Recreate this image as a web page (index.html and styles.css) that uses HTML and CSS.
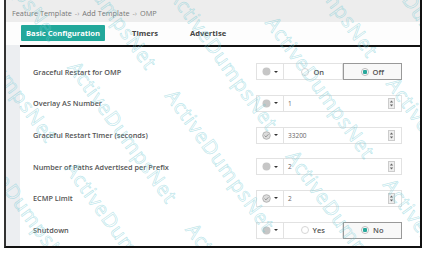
FILE: index.html
```html
<!DOCTYPE html>
<html lang="en">
<head>
    <meta charset="UTF-8">
    <title>Feature Template - OMP</title>
    <link rel="stylesheet" href="styles.css">
</head>
<body>
    <div class="frame">
        <div class="crumbs">Feature Template <span class="sep">-›</span> Add Template <span class="sep">-›</span> OMP</div>
        <div class="tabs">
            <span class="tab active">Basic Configuration</span>
            <span class="tab">Timers</span>
            <span class="tab">Advertise</span>
        </div>
        <div class="panel">
            <div class="strip"></div>
            <div class="form">
                <div class="row">
                    <span class="label">Graceful Restart for OMP</span>
                    <div class="control">
                        <span class="scope"><svg width="9" height="9" viewBox="0 0 9 9"><circle cx="4.5" cy="4.5" r="4" fill="#c6c6c6"/></svg><i class="caret"></i></span>
                        <div class="choice">
                            <span class="opt"><i class="radio"></i>On</span>
                            <span class="opt selected"><i class="radio"></i>Off</span>
                        </div>
                    </div>
                </div>
                <div class="row">
                    <span class="label">Overlay AS Number</span>
                    <div class="control">
                        <span class="scope"><svg width="9" height="9" viewBox="0 0 9 9"><circle cx="4.5" cy="4.5" r="4" fill="#c6c6c6"/></svg><i class="caret"></i></span>
                        <div class="field"><span class="value">1</span><span class="spin"><svg width="7" height="11" viewBox="0 0 7 11"><rect x="0.5" y="0.5" width="6" height="10" fill="#eee" stroke="#ccc"/><path d="M1.8 4.6 3.5 2.4 5.2 4.6z M1.8 6.4 3.5 8.6 5.2 6.4z" fill="#666"/></svg></span></div>
                    </div>
                </div>
                <div class="row">
                    <span class="label">Graceful Restart Timer (seconds)</span>
                    <div class="control">
                        <span class="scope"><svg width="9" height="9" viewBox="0 0 9 9"><circle cx="4.5" cy="4.5" r="3.8" fill="#dcdcdc" stroke="#a8a8a8" stroke-width="0.8"/><path d="M2.6 4.6l1.3 1.3 2.5-2.6" fill="none" stroke="#888" stroke-width="0.9"/></svg><i class="caret"></i></span>
                        <div class="field"><span class="value">33200</span><span class="spin"><svg width="7" height="11" viewBox="0 0 7 11"><rect x="0.5" y="0.5" width="6" height="10" fill="#eee" stroke="#ccc"/><path d="M1.8 4.6 3.5 2.4 5.2 4.6z M1.8 6.4 3.5 8.6 5.2 6.4z" fill="#666"/></svg></span></div>
                    </div>
                </div>
                <div class="row">
                    <span class="label">Number of Paths Advertised per Prefix</span>
                    <div class="control">
                        <span class="scope"><svg width="9" height="9" viewBox="0 0 9 9"><circle cx="4.5" cy="4.5" r="4" fill="#c6c6c6"/></svg><i class="caret"></i></span>
                        <div class="field"><span class="value">2</span><span class="spin"><svg width="7" height="11" viewBox="0 0 7 11"><rect x="0.5" y="0.5" width="6" height="10" fill="#eee" stroke="#ccc"/><path d="M1.8 4.6 3.5 2.4 5.2 4.6z M1.8 6.4 3.5 8.6 5.2 6.4z" fill="#666"/></svg></span></div>
                    </div>
                </div>
                <div class="row">
                    <span class="label">ECMP Limit</span>
                    <div class="control">
                        <span class="scope"><svg width="9" height="9" viewBox="0 0 9 9"><circle cx="4.5" cy="4.5" r="3.8" fill="#dcdcdc" stroke="#a8a8a8" stroke-width="0.8"/><path d="M2.6 4.6l1.3 1.3 2.5-2.6" fill="none" stroke="#888" stroke-width="0.9"/></svg><i class="caret"></i></span>
                        <div class="field"><span class="value">2</span><span class="spin"><svg width="7" height="11" viewBox="0 0 7 11"><rect x="0.5" y="0.5" width="6" height="10" fill="#eee" stroke="#ccc"/><path d="M1.8 4.6 3.5 2.4 5.2 4.6z M1.8 6.4 3.5 8.6 5.2 6.4z" fill="#666"/></svg></span></div>
                    </div>
                </div>
                <div class="row">
                    <span class="label">Shutdown</span>
                    <div class="control">
                        <span class="scope"><svg width="9" height="9" viewBox="0 0 9 9"><circle cx="4.5" cy="4.5" r="4" fill="#c6c6c6"/></svg><i class="caret"></i></span>
                        <div class="choice">
                            <span class="opt"><i class="radio"></i>Yes</span>
                            <span class="opt selected"><i class="radio"></i>No</span>
                        </div>
                    </div>
                </div>
            </div>
        </div>
        <div class="watermark">
            <div class="wm-line">ActiveDumpsNet ActiveDumpsNet ActiveDumpsNet ActiveDumpsNet</div>
            <div class="wm-line shift">ActiveDumpsNet ActiveDumpsNet ActiveDumpsNet ActiveDumpsNet</div>
            <div class="wm-line">ActiveDumpsNet ActiveDumpsNet ActiveDumpsNet ActiveDumpsNet</div>
            <div class="wm-line shift">ActiveDumpsNet ActiveDumpsNet ActiveDumpsNet ActiveDumpsNet</div>
            <div class="wm-line">ActiveDumpsNet ActiveDumpsNet ActiveDumpsNet ActiveDumpsNet</div>
            <div class="wm-line shift">ActiveDumpsNet ActiveDumpsNet ActiveDumpsNet ActiveDumpsNet</div>
            <div class="wm-line">ActiveDumpsNet ActiveDumpsNet ActiveDumpsNet ActiveDumpsNet</div>
            <div class="wm-line shift">ActiveDumpsNet ActiveDumpsNet ActiveDumpsNet ActiveDumpsNet</div>
            <div class="wm-line">ActiveDumpsNet ActiveDumpsNet ActiveDumpsNet ActiveDumpsNet</div>
            <div class="wm-line shift">ActiveDumpsNet ActiveDumpsNet ActiveDumpsNet ActiveDumpsNet</div>
        </div>
    </div>
</body>
</html>
```

FILE: styles.css
```css
body {
    margin: 0;
    background-color: #fff;
    font-family: "Open Sans", Lato, sans-serif;
    color: #555;
}
.frame {
    position: relative;
    width: 414px;
    height: 246px;
    margin-left: 4px;
    border-left: 2px solid #333;
    border-right: 2px solid #111;
    border-bottom: 2px solid #111;
    display: flex;
    flex-direction: column;
    overflow: hidden;
}
.crumbs {
    height: 22px;
    line-height: 26px;
    padding-left: 6px;
    background-color: #ededed;
    font-size: 7.3px;
    color: #777;
}
.sep {
    color: #999;
    margin: 0 1px;
}
.tabs {
    height: 24px;
    display: flex;
    align-items: center;
    gap: 22px;
    padding-left: 15px;
    background-color: #fdfdfd;
}
.tab {
    font-size: 7.6px;
    font-weight: bold;
    color: #444;
    padding: 0 5px;
    line-height: 16px;
}
.tab.active {
    background-color: #22a89b;
    color: #fff;
    border-radius: 1px;
}
.panel {
    flex: 1;
    display: flex;
}
.strip {
    width: 14px;
    background-color: #eceef1;
}
.form {
    flex: 1;
    border-top: 2px solid #111;
    padding: 9px 18px 0 13px;
    display: flex;
    flex-direction: column;
}
.row {
    height: 31.7px;
    display: flex;
    align-items: center;
    justify-content: space-between;
}
.label {
    font-size: 7.3px;
    font-weight: 600;
    color: #555;
}
.control {
    display: flex;
    width: 146px;
    height: 17px;
}
.scope {
    width: 27px;
    border: 1px solid #e2e2e2;
    border-right: none;
    display: flex;
    align-items: center;
    justify-content: center;
    gap: 3px;
    box-sizing: border-box;
}
.caret {
    border-left: 2px solid transparent;
    border-right: 2px solid transparent;
    border-top: 2px solid #333;
}
.choice {
    flex: 1;
    display: flex;
}
.opt {
    flex: 1;
    display: flex;
    align-items: center;
    justify-content: center;
    gap: 4px;
    border: 1px solid #e2e2e2;
    font-size: 7.5px;
    font-weight: 600;
    color: #555;
}
.opt.selected {
    border-color: #999;
    background-color: #f8f8f8;
}
.radio {
    width: 8px;
    height: 8px;
    border-radius: 50%;
    border: 1px solid #d6d6d6;
    background-color: #fff;
    box-sizing: border-box;
}
.opt.selected .radio {
    border-color: #bbb;
    background: radial-gradient(circle, #2aa89c 0 2px, #fff 2.5px);
}
.field {
    flex: 1;
    display: flex;
    align-items: center;
    justify-content: space-between;
    border: 1px solid #e2e2e2;
    padding: 0 6px 0 4px;
}
.value {
    font-size: 6.5px;
    color: #666;
}
.spin {
    display: flex;
}
.watermark {
    position: absolute;
    top: -180px;
    left: -120px;
    width: 700px;
    transform: rotate(54deg);
    transform-origin: center;
    pointer-events: none;
}
.wm-line {
    white-space: nowrap;
    font-size: 20px;
    letter-spacing: 1px;
    line-height: 62px;
    color: transparent;
    -webkit-text-stroke: 0.7px rgba(110, 200, 210, 0.45);
    word-spacing: 24px;
}
.wm-line.shift {
    padding-left: 80px;
}
```
